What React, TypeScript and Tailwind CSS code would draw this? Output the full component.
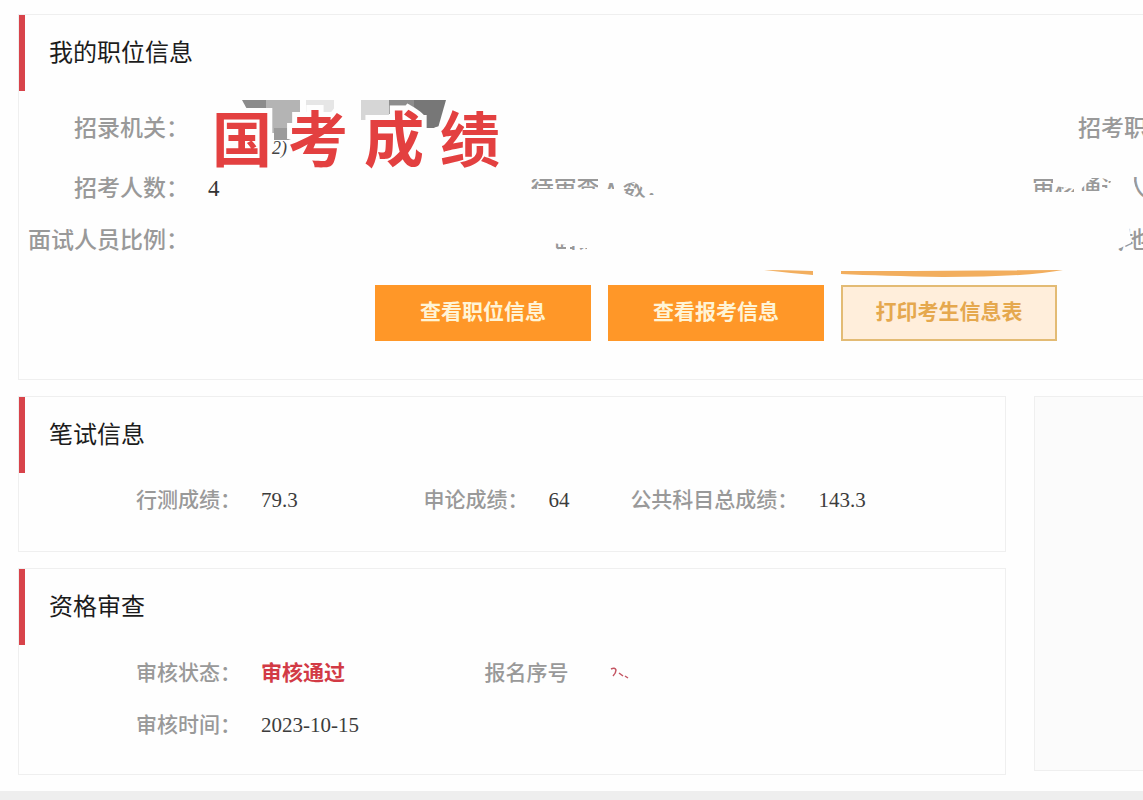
import type { ReactNode } from "react";

const Card = ({ title, className = "", children }: { title: string; className?: string; children: ReactNode }) => (
  <section className={`border border-[#efefef] bg-[#fefefe] ${className}`}>
    <h2 className="flex h-19 items-center border-l-[6px] border-[#d8434a] pl-6 text-2xl text-[#1c1c1c]">{title}</h2>
    {children}
  </section>
);

const Field = ({ label, children }: { label: string; children?: ReactNode }) => (
  <div className="flex items-center gap-5 text-[21px] whitespace-nowrap">
    <dt className="min-w-[105px] font-medium text-[#999]">{label}</dt>
    <dd className="text-[#3c3c3c]">{children}</dd>
  </div>
);

// Label that is partly rubbed out, "d" is the white area in a 161x36 box
const ErasedLabel = ({ label, d }: { label: string; d?: string }) => (
  <span className="relative block w-[170px] text-right">
    {label}
    {d && (
      <svg className="absolute top-0 right-0 h-9 w-[161px]" viewBox="0 0 161 36" fill="#fefefe">
        <path fillRule="evenodd" d={d} />
      </svg>
    )}
  </span>
);

const Sticker = () => (
  <div className="absolute top-[3px] left-0">
    <svg className="h-16 w-72" viewBox="0 0 288 64">
      <path d="M34 0H58V22H46Z" fill="#8b8b8b" />
      <path d="M58 0H92V33H58Z" fill="#b4b4b4" />
      <path d="M66 28H94V40H66Z" fill="#9b9b9b" />
      <path d="M98 0H126V14H98Z" fill="#e6e6e6" />
      <path d="M153 0H181V20H153Z" fill="#d6d6d6" />
      <path d="M181 0H208V14H181Z" fill="#8d8d8d" />
      <path d="M206 0H238L230 28H206Z" fill="#777" />
    </svg>
    <div className="absolute top-1 left-1 flex gap-4 text-[60px] leading-[76px] font-bold text-[#e34040] [-webkit-text-stroke:10px_#fefefe] [paint-order:stroke] [stroke-linejoin:round]">
      <span>国</span>
      <span>考</span>
      <span>成</span>
      <span>绩</span>
    </div>
    <span className="absolute top-9 left-16 text-lg leading-6 text-[#444] italic">2)</span>
  </div>
);

const rowClass =
  "grid grid-cols-[170px_7fr_170px_8fr_120px] items-center text-[23px] leading-9 font-medium whitespace-nowrap text-[#999]";

const App = () => {
  return (
    <div className="overflow-hidden bg-[#fefefe] font-['Liberation_Serif','Noto_Sans_CJK_SC',serif]">
      <main className="flex flex-col gap-4 pt-3.5 pb-4 pl-[18px]">
        {/* Position info */}
        <Card title="我的职位信息" className="border-r-0 pb-[38px]">
          <div className="overflow-hidden pt-[6px]">
            <div className={`${rowClass} h-16`}>
              <span className="text-right">招录机关：</span>
              <div className="relative h-16 pl-[19px]">
                <div className="relative h-full">
                  <Sticker />
                </div>
              </div>
              <span />
              <span />
              <ErasedLabel label="招考职位：" />
            </div>
            <div className={`${rowClass} h-14`}>
              <span className="text-right">招考人数：</span>
              <span className="pl-[19px] font-normal text-[#333]">4</span>
              <ErasedLabel
                label="待审查人数："
                d="M0 0H161V36H0Z M22 8H90V18H22Z M97 12H106V18H97Z M114 14L126 11L138 19V27L124 25L114 21Z M140 19H150V24H140Z"
              />
              <span />
              <ErasedLabel
                label="审核通过人数："
                d="M0 0H161V36H0Z M0 8H21V21H0Z M23 15L42 18V21H23Z M48 19L60 7H68V20H48Z M70 7L79 10L76 17H70Z M101 6H106L117 25V35H108Z"
              />
            </div>
            <div className={`${rowClass} h-12`}>
              <span className="text-right">面试人员比例：</span>
              <span />
              <ErasedLabel label="面试时间：" d="M0 0H161V36H0Z M45 20L58 22V27H51L45 23Z M62 23H67V27H62Z M70 25H79V27H70Z" />
              <span />
              <ErasedLabel label="面试地点：" d="M0 0H97L99 20L86 26V36H0Z" />
            </div>
          </div>
          <div className="flex h-5 justify-end pr-20">
            <svg className="h-4 w-[300px]" viewBox="0 0 300 16" fill="#f2ae5e">
              <path d="M1 5Q24 5 50 6V10Q26 8 1 5Z" />
              <path d="M78 6H150L300 5Q262 12 180 12Q120 11 78 9Z" />
            </svg>
          </div>
          <div className="flex justify-end gap-[17px] pr-[86px] text-[21px] font-bold">
            <button className="h-14 w-[216px] bg-[#ff9728] text-[#fff4d6]">查看职位信息</button>
            <button className="h-14 w-[216px] bg-[#ff9728] text-[#fff4d6]">查看报考信息</button>
            <button className="h-14 w-[216px] border-2 border-[#e3bb74] bg-[#ffeedb] text-[#e5a84e]">打印考生信息表</button>
          </div>
        </Card>

        <div className="flex items-start gap-7">
          <div className="flex flex-1 flex-col gap-4">
            {/* Written test */}
            <Card title="笔试信息" className="pb-[22px]">
              <dl className="grid h-14 grid-cols-[405fr_207fr_375fr] items-center">
                <div className="pl-[117px]">
                  <Field label="行测成绩：">79.3</Field>
                </div>
                <Field label="申论成绩：">64</Field>
                <Field label="公共科目总成绩：">143.3</Field>
              </dl>
            </Card>

            {/* Qualification review */}
            <Card title="资格审查" className="pb-[25px]">
              <dl className="grid h-[58px] grid-cols-[466fr_521fr] items-center">
                <div className="pl-[117px]">
                  <Field label="审核状态：">
                    <span className="font-bold text-[#d23a45]">审核通过</span>
                  </Field>
                </div>
                <Field label="报名序号">
                  <svg className="h-4 w-5" viewBox="0 0 20 16" fill="none" stroke="#c45563" strokeWidth="1.5">
                    <path d="M1 3Q5 1 6 4Q6 7 3 10" />
                    <path d="M9 7L13 10M15 10L18 12" />
                  </svg>
                </Field>
              </dl>
              <dl className="flex h-[46px] items-center pl-[117px]">
                <Field label="审核时间：">2023-10-15</Field>
              </dl>
            </Card>
          </div>
          <aside className="h-[375px] w-[109px] border border-r-0 border-[#efefef] bg-[#fbfbfb]" />
        </div>
      </main>
      <div className="h-[9px] bg-[#eeeeee]" />
    </div>
  );
};

export default App;
